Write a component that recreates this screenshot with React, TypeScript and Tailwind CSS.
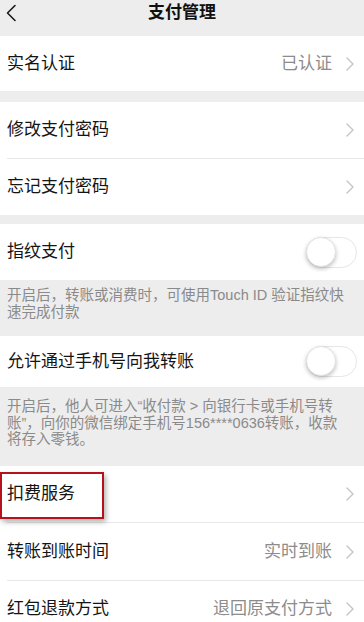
import React from 'react';

function Chevron() {
  return (
    <svg width="8" height="14" viewBox="0 0 8 14" className="shrink-0">
      <path d="M1 1l6 6-6 6" fill="none" stroke="#c4c4c4" strokeWidth="1.4" strokeLinecap="round" strokeLinejoin="round" />
    </svg>
  );
}

function Toggle() {
  return (
    <div className="relative w-[51px] h-[31px] rounded-full border-[1.5px] border-[#e6e6e6] bg-white shrink-0">
      <div className="absolute left-[-1px] top-[-1px] w-[30px] h-[30px] rounded-full bg-white shadow-[0_2px_4px_rgba(0,0,0,0.25)] border border-[#e2e2e2]" />
    </div>
  );
}

type RowProps = {
  label: string;
  value?: string;
  toggle?: boolean;
  height: string;
  divider?: boolean;
};

function Row({ label, value, toggle, height, divider }: RowProps) {
  return (
    <div className={`bg-white ${divider ? 'border-b border-[#e8e8e8]' : ''}`}>
      <div className={`flex items-center justify-between pl-[7px] ${toggle ? 'pr-[7px]' : 'pr-[10px]'} ${height}`}>
        <span className="text-[17px] text-[#141414]">{label}</span>
        {toggle ? (
          <Toggle />
        ) : (
          <div className="flex items-center gap-[14px]">
            {value && <span className="text-[17px] text-[#8c8c8c]">{value}</span>}
            <Chevron />
          </div>
        )}
      </div>
    </div>
  );
}

export default function App() {
  return (
    <div className="w-[364px] h-[622px] overflow-hidden bg-[#ededed] font-['Liberation_Sans','Noto_Sans_CJK_SC',sans-serif]">
      {/* Nav bar */}
      <div className="relative h-[36px] flex justify-center">
        <svg width="12" height="18" viewBox="0 0 12 18" className="absolute left-[5px] top-[4px]">
          <path d="M10 1.5L2.5 9l7.5 7.5" fill="none" stroke="#1a1a1a" strokeWidth="1.6" strokeLinecap="round" strokeLinejoin="round" />
        </svg>
        <span className="text-[17px] leading-[26px] font-semibold text-[#111]">支付管理</span>
      </div>

      <Row label="实名认证" value="已认证" height="h-[55px]" />

      <div className="h-[11px]" />

      <div className="bg-white">
        <div className="border-b border-[#e8e8e8] ml-[7px]">
          <div className="flex items-center justify-between pr-[10px] h-[56px]">
            <span className="text-[17px] text-[#141414]">修改支付密码</span>
            <Chevron />
          </div>
        </div>
        <div className="flex items-center justify-between pl-[7px] pr-[10px] h-[56px]">
          <span className="text-[17px] text-[#141414]">忘记支付密码</span>
          <Chevron />
        </div>
      </div>

      <div className="h-[9px]" />

      <Row label="指纹支付" toggle height="h-[56px]" />
      <div className="h-[56px] pl-[7px] pt-[7px] text-[14.5px] leading-[16.5px] text-[#8a8a8a]">
        <span className="block whitespace-nowrap">开启后，转账或消费时，可使用Touch ID 验证指纹快</span>
        <span className="block whitespace-nowrap">速完成付款</span>
      </div>

      <Row label="允许通过手机号向我转账" toggle height="h-[51px]" />
      <div className="h-[79px] pl-[7px] pt-[11px] text-[14.5px] leading-[16.5px] text-[#8a8a8a]">
        <span className="block whitespace-nowrap">开启后，他人可进入“收付款 &gt; 向银行卡或手机号转</span>
        <span className="block whitespace-nowrap">账”，向你的微信绑定手机号156****0636转账，收款</span>
        <span className="block whitespace-nowrap">将存入零钱。</span>
      </div>

      <div className="bg-white">
        <div className="relative border-b border-[#e8e8e8] ml-[7px]">
          <div className="flex items-center justify-between pr-[10px] h-[56px]">
            <span className="text-[17px] text-[#141414]">扣费服务</span>
            <Chevron />
          </div>
          {/* annotation box */}
          <div className="absolute left-[-7px] top-[6px] w-[104px] h-[47px] border-2 border-[#b5121b] shadow-[2px_3px_5px_rgba(0,0,0,0.3)]" />
        </div>
        <div className="border-b border-[#e8e8e8] ml-[7px]">
          <div className="flex items-center justify-between pr-[10px] h-[57px]">
            <span className="text-[17px] text-[#141414]">转账到账时间</span>
            <div className="flex items-center gap-[14px]">
              <span className="text-[17px] text-[#8c8c8c]">实时到账</span>
              <Chevron />
            </div>
          </div>
        </div>
        <div className="flex items-center justify-between pl-[7px] pr-[10px] h-[56px]">
          <span className="text-[17px] text-[#141414]">红包退款方式</span>
          <div className="flex items-center gap-[14px]">
            <span className="text-[17px] text-[#8c8c8c]">退回原支付方式</span>
            <Chevron />
          </div>
        </div>
      </div>
    </div>
  );
}
